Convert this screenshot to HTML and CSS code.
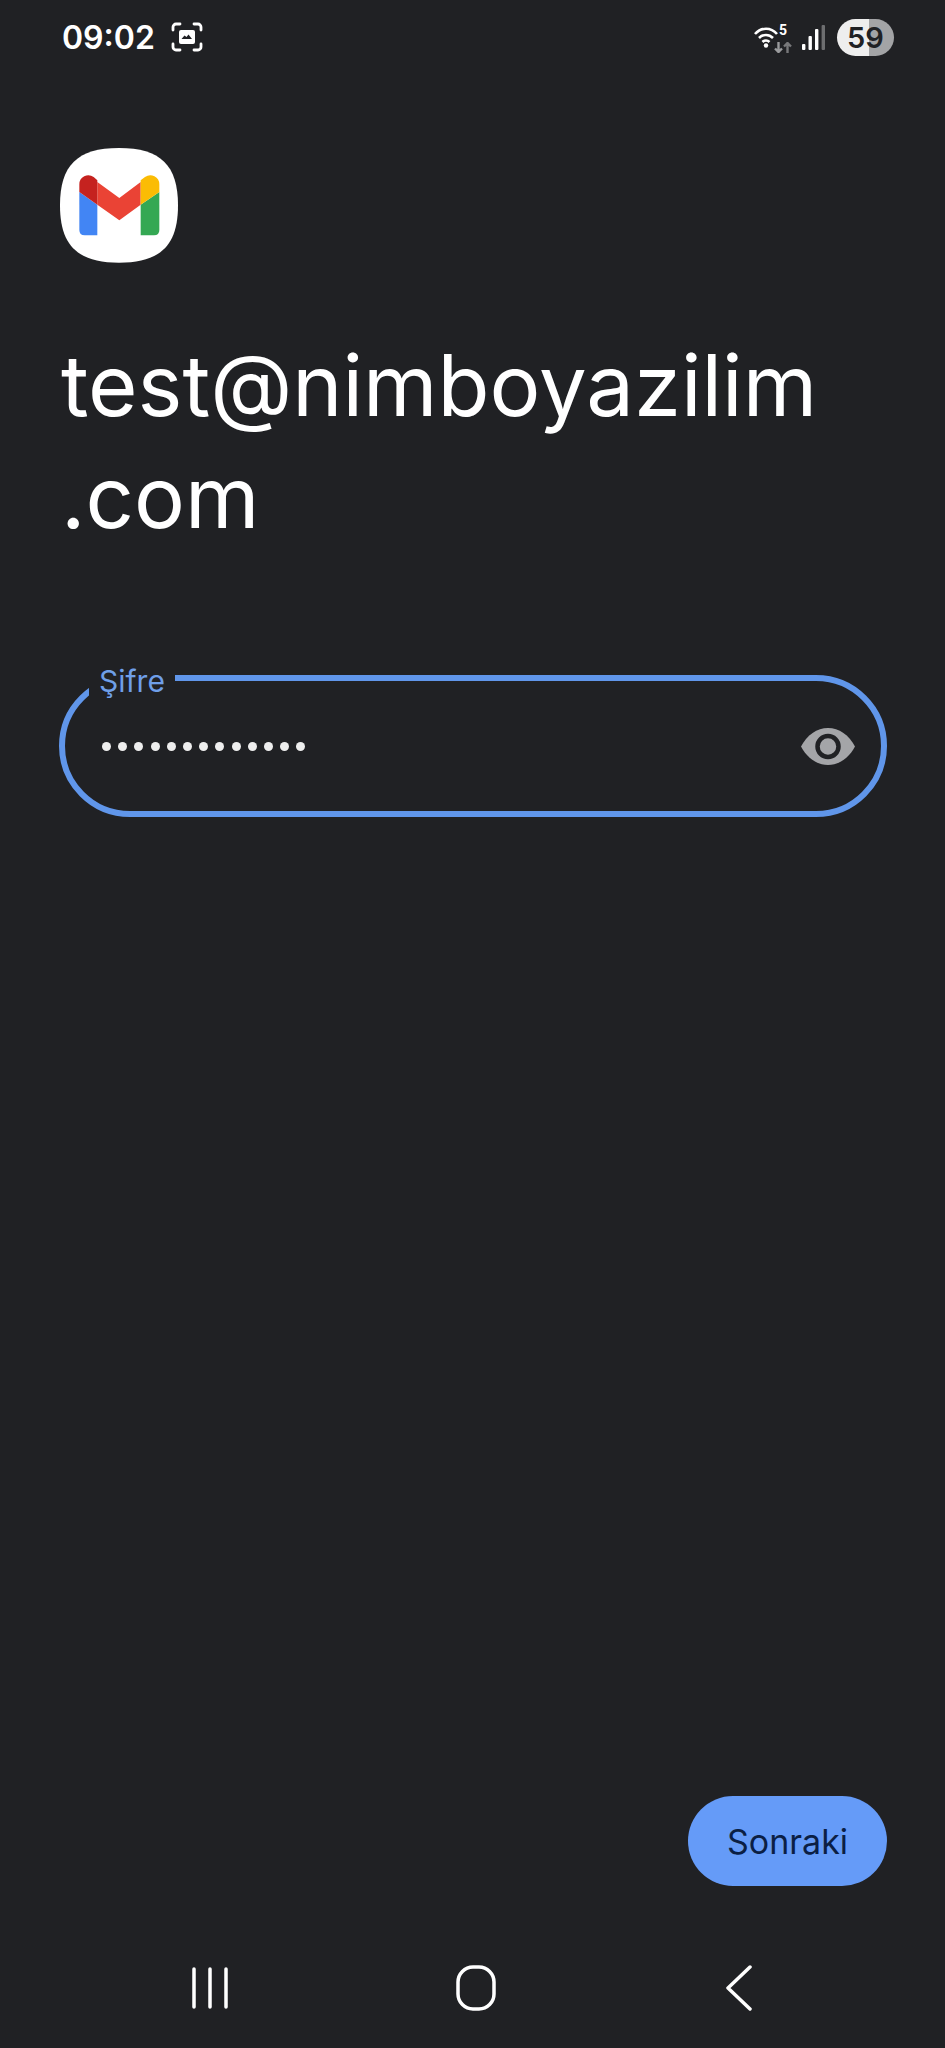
FILE: index.html
```html
<!DOCTYPE html>
<html lang="tr">
<head>
    <meta charset="UTF-8">
    <meta name="viewport" content="width=device-width, initial-scale=1.0">
    <title>Gmail - Şifre</title>
    <link rel="stylesheet" href="styles.css">
</head>
<body>
    <div class="screen">
        <!-- Durum çubuğu -->
        <div class="status-bar">
            <div class="status-left">
                <span class="clock">09:02</span>
                <svg class="capture-icon" width="32" height="30" viewBox="0 0 32 30" fill="none" stroke="#fff" stroke-width="2.800" stroke-linecap="round">
                    <path d="M2 8V5a3 3 0 0 1 3-3h4M23 2h4a3 3 0 0 1 3 3v3M30 22v3a3 3 0 0 1-3 3h-4M9 28H5a3 3 0 0 1-3-3v-3"/>
                    <rect x="8" y="8" width="16" height="14" rx="2" fill="#fff" stroke="none"/>
                    <path d="M10.500 17l3-3.500 2 1.500 2-2.500 3.500 4.500z" fill="#202124" stroke="none"/>
                </svg>
            </div>
            <div class="status-right">
                <div class="wifi">
                    <svg class="wifi-arcs" width="24" height="22" viewBox="0 0 24 22" fill="none">
                        <path d="M1 8C7 1 17 1 23 8M5 12c4-4 10-4 14 0M8.500 16c2-2 5-2 7 0" stroke="#fff" stroke-width="2.600"/>
                        <circle cx="12" cy="19.500" r="2.200" fill="#fff"/>
                    </svg>
                    <span class="wifi-num">5</span>
                    <svg class="wifi-arrows" width="18" height="11" viewBox="0 0 18 11" fill="none" stroke-width="2.400">
                        <path d="M4.500 0v10M1 6.500l3.500 3.500L8 6.500" stroke="#9a9b9d"/>
                        <path d="M13.500 11V1M10 4.500L13.500 1 17 4.500" stroke="#77787a"/>
                    </svg>
                </div>
                <svg class="signal" width="23" height="25" viewBox="0 0 23 25">
                    <rect x="0" y="19" width="3.400" height="6" rx="1" fill="#fff"/>
                    <rect x="6.500" y="11" width="3.400" height="14" rx="1" fill="#fff"/>
                    <rect x="13" y="4" width="3.400" height="21" rx="1" fill="#fff"/>
                    <rect x="19.600" y="0" width="3.400" height="25" rx="1" fill="#6d6e70"/>
                </svg>
                <div class="battery">59</div>
            </div>
        </div>

        <main class="content">
            <svg class="app-icon" width="118" height="115" viewBox="30 38 354 345">
                <path d="M207 38C332 38 384 90 384 210S332 382 207 382 30 330 30 210 82 38 207 38Z" fill="#fff"/>
                <path d="M88 170L142 208V300H104Q88 300 88 284Z" fill="#4285f4"/>
                <path d="M328 170L272 208V300H312Q328 300 328 284Z" fill="#34a853"/>
                <path d="M142 140L208 188 272 140V208L208 255 142 208Z" fill="#ea4335"/>
                <path d="M88 170V147A27 27 0 0 1 131 125L142 135V208Z" fill="#c5221f"/>
                <path d="M328 170V147A27 27 0 0 0 285 125L272 135V208Z" fill="#fbbc04"/>
            </svg>

            <h1 class="email">test@nimboyazilim<br>.com</h1>

            <div class="field">
                <label class="field-label">Şifre</label>
                <div class="dots">
                    <i></i><i></i><i></i><i></i><i></i><i></i><i></i><i></i><i></i><i></i><i></i><i></i><i></i>
                </div>
                <svg class="eye" width="54" height="37" viewBox="0 0 54 37">
                    <path d="M0 18.500C6 7 16 0 27 0S48 7 54 18.500C48 30 38 37 27 37S6 30 0 18.500Z" fill="#a4a5a8"/>
                    <circle cx="27" cy="18.500" r="10.500" fill="none" stroke="#202124" stroke-width="4.500"/>
                </svg>
            </div>

            <div class="actions">
                <button class="next-btn">Sonraki</button>
            </div>
        </main>

        <!-- Alt gezinme -->
        <nav class="nav-bar">
            <svg width="38" height="46" viewBox="0 0 38 46" stroke="#fff" stroke-width="3.500" stroke-linecap="round">
                <path d="M3 4v38M19 4v38M35 4v38"/>
            </svg>
            <svg width="40" height="46" viewBox="0 0 40 46" fill="none" stroke="#fff" stroke-width="3.500">
                <rect x="2" y="2" width="36" height="42" rx="15"/>
            </svg>
            <svg width="32" height="46" viewBox="0 0 32 46" fill="none" stroke="#fff" stroke-width="3.500" stroke-linecap="round" stroke-linejoin="round">
                <path d="M28 2L6 23l22 21"/>
            </svg>
        </nav>
    </div>
</body>
</html>
```

FILE: styles.css
```css
* {
    box-sizing: border-box;
}

body {
    margin: 0;
    background-color: #202124;
    font-family: 'Roboto', sans-serif;
    color: #fff;
}

.screen {
    width: 945px;
    height: 2048px;
    display: flex;
    flex-direction: column;
    overflow: hidden;
}

/* Durum çubuğu */
.status-bar {
    height: 74px;
    padding: 0 51px 0 62px;
    display: flex;
    justify-content: space-between;
    align-items: center;
}

.status-left {
    display: flex;
    align-items: center;
    gap: 16px;
}

.clock {
    font-family: 'Inter', sans-serif;
    font-size: 32px;
    font-weight: 600;
}

.status-right {
    display: flex;
    align-items: center;
    gap: 10px;
}

.wifi {
    position: relative;
    width: 38px;
    height: 34px;
}

.wifi-arcs {
    display: block;
    margin-top: 6px;
}

.wifi-num {
    position: absolute;
    top: 3px;
    left: 25px;
    font-size: 14px;
    font-weight: 700;
    line-height: 14px;
}

.wifi-arrows {
    position: absolute;
    top: 22px;
    left: 20px;
}

.battery {
    width: 57px;
    height: 37px;
    margin-left: 2px;
    border-radius: 19px;
    background: linear-gradient(to right, #eeeeee 56%, #a3a4a6 56%);
    color: #202124;
    font-family: 'Inter', sans-serif;
    font-size: 29px;
    font-weight: 600;
    line-height: 37px;
    text-align: center;
}

/* İçerik */
.content {
    flex: 1;
    padding: 74px 58px 0 60px;
    display: flex;
    flex-direction: column;
}

.app-icon {
    display: block;
}

.email {
    margin: 67px 0 0 1px;
    font-family: 'Inter', sans-serif;
    font-size: 85px;
    font-weight: 400;
    line-height: 112px;
}

.field {
    position: relative;
    margin: 121px 0 0 -1px;
    height: 142px;
    border: 6px solid #6096ea;
    border-radius: 71px;
    padding: 0 26px 0 37px;
    display: flex;
    justify-content: space-between;
    align-items: center;
}

.field-label {
    position: absolute;
    top: -17px;
    left: 24px;
    padding: 0 10px;
    background-color: #202124;
    color: #6f9fe8;
    font-family: 'Inter', sans-serif;
    font-size: 30px;
    line-height: 34px;
}

.dots {
    display: flex;
    gap: 7.200px;
}

.dots i {
    width: 9px;
    height: 9px;
    border-radius: 50%;
    background-color: #eeeeee;
}

.actions {
    margin-top: auto;
    display: flex;
    justify-content: flex-end;
    padding-bottom: 50px;
}

.next-btn {
    width: 199px;
    height: 90px;
    border: none;
    border-radius: 45px;
    background-color: #659bf8;
    color: #0b1f45;
    font-family: 'Inter', sans-serif;
    font-size: 34px;
    font-weight: 400;
    cursor: pointer;
}

/* Alt gezinme */
.nav-bar {
    height: 112px;
    padding: 0 191px 8px;
    display: flex;
    justify-content: space-between;
    align-items: center;
}
```
